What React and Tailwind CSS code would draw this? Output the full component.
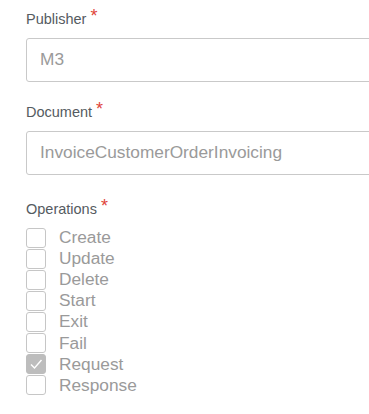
import { useState } from 'react'

const OPERATIONS = ['Create', 'Update', 'Delete', 'Start', 'Exit', 'Fail', 'Request', 'Response']

function FieldLabel({ children }) {
  return (
    <label className="flex items-start text-[14.5px] leading-[18px] text-[#555b61]">
      {children}
      <span className="ml-[4px] text-[18px] leading-[13px] text-[#e0443a]">*</span>
    </label>
  )
}

function TextField({ value }) {
  return (
    <div className="mt-[10px] w-[360px] h-[44px] border border-[#c9c9c9] rounded-[3px] px-[13px] flex items-center text-[17.3px] text-[#9a9a9a] bg-white">
      {value}
    </div>
  )
}

export default function App() {
  const [checked, setChecked] = useState({ Request: true })

  return (
    <div className="w-[369px] h-[414px] overflow-hidden bg-white pl-[26px] pt-[10px] font-['Liberation_Sans',Arial,sans-serif]">
      {/* Publisher */}
      <div>
        <FieldLabel>Publisher</FieldLabel>
        <TextField value="M3" />
      </div>

      {/* Document */}
      <div className="mt-[21px]">
        <FieldLabel>Document</FieldLabel>
        <TextField value="InvoiceCustomerOrderInvoicing" />
      </div>

      {/* Operations */}
      <div className="mt-[25px]">
        <FieldLabel>Operations</FieldLabel>
        <div className="mt-[9px] flex flex-col">
          {OPERATIONS.map(op => (
            <label key={op} className="flex items-center h-[21.1px] cursor-pointer">
              <button
                type="button"
                onClick={() => setChecked(c => ({ ...c, [op]: !c[op] }))}
                className={`w-[20px] h-[20px] rounded-[3px] border flex items-center justify-center flex-shrink-0 ${
                  checked[op] ? 'bg-[#bdbdbd] border-[#bdbdbd]' : 'bg-white border-[#c6c6c6]'
                }`}
              >
                {checked[op] && (
                  <svg width="14" height="14" viewBox="0 0 14 14" fill="none">
                    <path d="M2 7.5 L5.5 11 L12.5 3" stroke="white" strokeWidth="1.4" />
                  </svg>
                )}
              </button>
              <span className="ml-[13px] text-[17.3px] leading-[21px] text-[#9a9a9a]">{op}</span>
            </label>
          ))}
        </div>
      </div>
    </div>
  )
}
